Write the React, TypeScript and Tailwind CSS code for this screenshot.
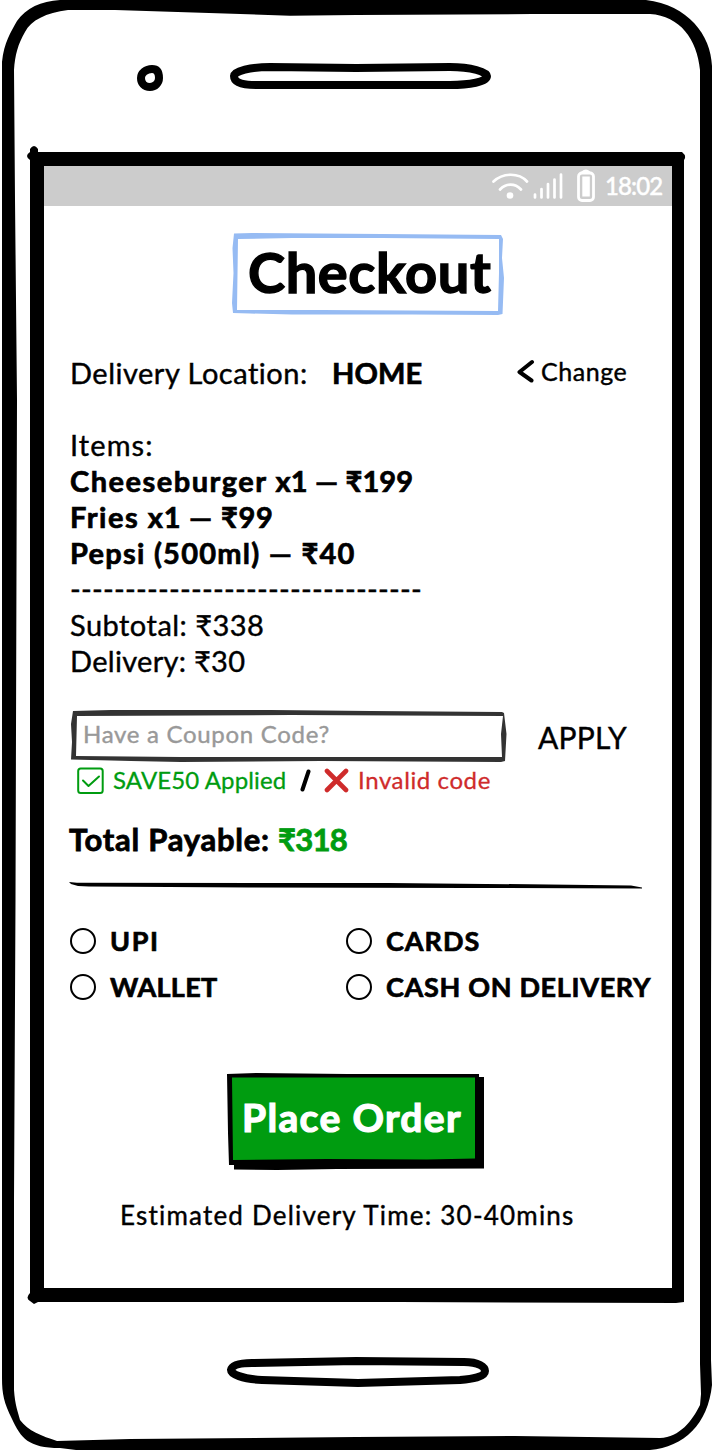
import type { ReactNode } from "react";

function PhoneFrame() {
  return (
    <svg className="absolute inset-0" width="712" height="1450" viewBox="0 0 712 1450" aria-hidden="true">
      <path
        fillRule="evenodd"
        d="M60 0H646C688 5 711 35 712 66V640L711 1000V1360L712 1385C708 1424 684 1447 650 1450H76L60 1448C28 1448 21 1438 12 1419C4 1403 2 1394 2 1378V62C4 42 11 32 17 21C26 8 41 1 60 0ZM68 10C46 13 31 20 25 32C18 44 15 55 14 70L15 200L17 400L15.500 900L14 1200V1390C15 1405 18 1412 20 1420C28 1431 42 1436 57 1441L130 1439L356 1437L515 1436L660 1438C680 1437 692 1421 700 1405L701 1394L700 1364V70C697 39 680 16 650 14H532L356 15L290 15.700L115 10Z"
      />
      <path fillRule="evenodd" d="M30 152V149Q34 143 38 149V152H682Q687 156 684 160V1302L676 1303L400 1302H38L34 1304L30 1301Q25 1298 30 1293V160Q24 156 30 152ZM44 166V1288H672V166Z" />
      <g fill="none" stroke="#000" strokeWidth="8">
        <path d="M152 69C158 69 159 74 159 78C159 83 155 87 150 87C144 87 141 83 141 78C141 73 146 69 152 69Z" />
        <path d="M270 67L356 68L450 67C471 67 487 72 487 76C487 82 469 85 450 85H256C240 85 234 82 234 76C234 71 251 67 270 67Z" />
        <path d="M252 1363L356 1361L464 1362C479 1362 485 1367 485 1371C485 1377 472 1379 460 1380L358 1383L262 1380C242 1379 231 1374 231 1370C232 1365 239 1363 252 1363Z" />
      </g>
    </svg>
  );
}

function StatusBar() {
  return (
    <div className="flex h-10 items-center bg-[#cccccc] pl-[447px] text-white">
      <svg width="38" height="30" viewBox="0 0 38 30" fill="none" stroke="#fff" strokeWidth="2.700" strokeLinecap="round" aria-hidden="true">
        <path d="M2.500 10.500C12 1.500 28 1.500 36 10.500M9 18.500C15 12 24 12 30 18.500" />
        <circle cx="19" cy="24.500" r="3.300" fill="#fff" stroke="none" />
      </svg>
      <svg className="ml-1" width="32" height="30" viewBox="0 0 32 30" fill="none" stroke="#fff" strokeWidth="2.700" strokeLinecap="round" aria-hidden="true">
        <path d="M2 26.500V23.500M8.500 26.500V18M15 26.500V13M21.500 26.500V8.500M28 26.500V3.500" />
      </svg>
      <svg className="ml-[11px]" width="20" height="34" viewBox="0 0 20 34" aria-hidden="true">
        <path d="M6 3Q10 -0.500 13.500 3Z" fill="#fff" stroke="#fff" strokeWidth="1.500" />
        <rect x="2.500" y="4" width="15" height="27.500" rx="3.500" fill="none" stroke="#fff" strokeWidth="2.800" />
        <rect x="6.300" y="7.500" width="7.500" height="20" fill="#fff" />
      </svg>
      <span className="ml-[9px] text-2xl leading-none font-medium tracking-[-0.900px] [-webkit-text-stroke:0.400px]">18:02</span>
    </div>
  );
}

function Heading() {
  return (
    <div className="relative mt-[27px] ml-[188px] flex h-[82px] w-[272px] items-center">
      <svg className="absolute inset-0" width="272" height="82" viewBox="0 0 272 82" aria-hidden="true">
        <path fillRule="evenodd" fill="#96bbf3" d="M2 0.500L20 0L150 1L269 2L271 6L270 25L272 45L270.500 81L266 82L180 81.500H60L18 80.500L1 80L0 70L1.500 40L0.500 15ZM6 6L5 77H90L266 78L267 40V6L150 5H60Z" />
      </svg>
      <h1 className="relative -mt-1 pl-4 text-[56px] leading-none font-bold tracking-[0.600px] [-webkit-text-stroke:1.400px]">Checkout</h1>
    </div>
  );
}

function DeliveryRow() {
  return (
    <div className="mt-[39px] flex h-9 items-center text-[29px] leading-none">
      <span className="w-[262px] tracking-[0.500px]">Delivery Location:</span>
      <b className="w-[185px] tracking-[0.100px] [-webkit-text-stroke:0.700px]">HOME</b>
      <button className="-mt-0.5 flex items-center text-[25px] leading-none tracking-[0.550px]">
        <svg className="mr-1.5" width="18" height="24" viewBox="0 0 18 24" fill="none" stroke="#000" strokeWidth="4" strokeLinecap="round" strokeLinejoin="round" aria-hidden="true">
          <path d="M15 3L2.500 13L14.500 21.500" />
        </svg>
        Change
      </button>
    </div>
  );
}

function OrderSummary() {
  return (
    <div className="mt-[37px] flex flex-col text-[29px] leading-9 whitespace-nowrap">
      <span className="tracking-[1.100px]">Items:</span>
      <b className="tracking-[0.150px] [-webkit-text-stroke:0.700px]">
        <span className="tracking-[1.500px]">Cheeseburger </span>x1 — ₹199
      </b>
      <b className="tracking-[0.800px] [-webkit-text-stroke:0.700px]">
        <span className="tracking-[1.500px]">Fries </span>x1 — ₹99
      </b>
      <b className="tracking-[1.250px] [-webkit-text-stroke:0.700px]">Pepsi (500ml) — ₹40</b>
      <span className="tracking-[0.230px] [-webkit-text-stroke:0.400px]">--------------------------------</span>
      <span className="tracking-[0.470px]">Subtotal: ₹338</span>
      <span className="tracking-[0.300px]">Delivery: ₹30</span>
    </div>
  );
}

function Coupon() {
  return (
    <>
      <div className="mt-[31px] flex h-[52px] items-center">
        <div className="relative ml-px flex h-[52px] w-[436px] items-center">
          <svg className="absolute inset-0" width="436" height="52" viewBox="0 0 436 52" aria-hidden="true">
            <path fillRule="evenodd" fill="#333" d="M2 1L40 0H200L300 1L431 2L433 3L435.500 24L434 51L430 52L250 51L110 52L60 51L0 49.500L1 32L0 14ZM6 6L5 46L110 47H431L430 24L432 6L220 5Z" />
          </svg>
          <span className="relative -mt-1 pl-3 text-2xl leading-none tracking-[0.700px] whitespace-nowrap text-[#999] [-webkit-text-stroke:0.400px]">Have a Coupon Code?</span>
        </div>
        <button className="mt-px ml-[31px] text-[30px] leading-none tracking-[0.250px]">APPLY</button>
      </div>
      <div className="mt-1 flex h-[30px] items-center text-2xl leading-none whitespace-nowrap">
        <svg className="ml-[7px]" width="28" height="28" viewBox="0 0 28 28" fill="none" stroke="#009c10" strokeWidth="2" strokeLinecap="round" strokeLinejoin="round" aria-hidden="true">
          <rect x="1.200" y="1.500" width="24.500" height="24.500" rx="2.500" />
          <path d="M6 13.500L11.500 19L22 9.500" />
        </svg>
        <span className="-mt-0.5 ml-2 w-[187px] tracking-[0.120px] text-[#009c10] [-webkit-text-stroke:0.300px]">SAVE50 Applied</span>
        <svg width="12" height="24" viewBox="0 0 12 24" stroke="#000" strokeWidth="4" strokeLinecap="round" aria-hidden="true">
          <path d="M8.500 2.500L2.500 20.500" />
        </svg>
        <svg className="ml-3" width="25" height="26" viewBox="0 0 25 26" stroke="#cf2b2b" strokeWidth="4.600" strokeLinecap="round" aria-hidden="true">
          <path d="M3 3L22 22M22 3L3 22" />
        </svg>
        <span className="-mt-0.5 ml-[9px] tracking-[0.600px] text-[#cf2b2b] [-webkit-text-stroke:0.300px]">Invalid code</span>
      </div>
    </>
  );
}

function Total() {
  return (
    <>
      <div className="mt-[25px] flex h-9 items-center text-[31px] leading-none font-bold whitespace-nowrap [-webkit-text-stroke:0.800px]">
        <span className="-ml-px w-[209px] tracking-[0.740px]">Total Payable:</span>
        <span className="tracking-[-0.700px] text-[#009c10]">₹318</span>
      </div>
      <svg className="-ml-px mt-[25px]" width="576" height="8" viewBox="0 0 576 8" aria-hidden="true">
        <path d="M0 0L8 0.800L320 1L480 2.500L562 3.500L573 5.500V6.500L400 6L180 5.500L20 4.500L9 4L2 2Z" />
      </svg>
    </>
  );
}

function Radio({ children, spacing }: { children: ReactNode; spacing: string }) {
  return (
    <label className="flex h-[46px] items-center text-[27px] leading-none font-bold whitespace-nowrap [-webkit-text-stroke:0.700px]">
      <span className="mr-3.5 size-[26px] shrink-0 rounded-full border-2 border-black" />
      <span className={`-mt-0.5 ${spacing}`}>{children}</span>
    </label>
  );
}

function PaymentMethods() {
  return (
    <div className="mt-[28px] grid grid-cols-[276px_1fr]">
      <Radio spacing="tracking-[1.600px]">UPI</Radio>
      <Radio spacing="tracking-[1px]">CARDS</Radio>
      <Radio spacing="tracking-[0.320px]">WALLET</Radio>
      <Radio spacing="tracking-[0.680px]">CASH ON DELIVERY</Radio>
    </div>
  );
}

function PlaceOrder() {
  return (
    <button className="relative mt-[63px] ml-[183px] flex h-[97px] w-[257px] items-center text-white">
      <svg className="absolute inset-0" width="257" height="97" viewBox="0 0 257 97" aria-hidden="true">
        <path d="M0 1L30 0L120 1H252V4H257V95.500L110 96L50 97L7 96.500V92H2L1 60Z" />
        <path fill="#009c10" d="M5 4.500L120 4.500H248V85.500L200 86.500L100 86L6 87Z" />
      </svg>
      <span className="relative -mt-2 pl-[15px] text-[39px] leading-none font-bold tracking-[1.350px] [-webkit-text-stroke:1.200px]">Place Order</span>
    </button>
  );
}

export default function App() {
  return (
    <main className="relative h-[1450px] w-[712px] overflow-hidden bg-white pt-[166px] pl-11 font-['Lato','Noto_Sans',sans-serif] text-black">
      <PhoneFrame />
      <div className="relative flex h-[1122px] w-[628px] flex-col">
        <StatusBar />
        <Heading />
        <div className="flex flex-col pl-[26px] [-webkit-text-stroke:0.400px]">
          <DeliveryRow />
          <OrderSummary />
          <Coupon />
          <Total />
          <PaymentMethods />
        </div>
        <PlaceOrder />
        <p className="mt-[27px] ml-[76px] text-[26px] leading-9 tracking-[1.200px] whitespace-nowrap [-webkit-text-stroke:0.400px]">Estimated Delivery Time: 30-40mins</p>
      </div>
    </main>
  );
}
